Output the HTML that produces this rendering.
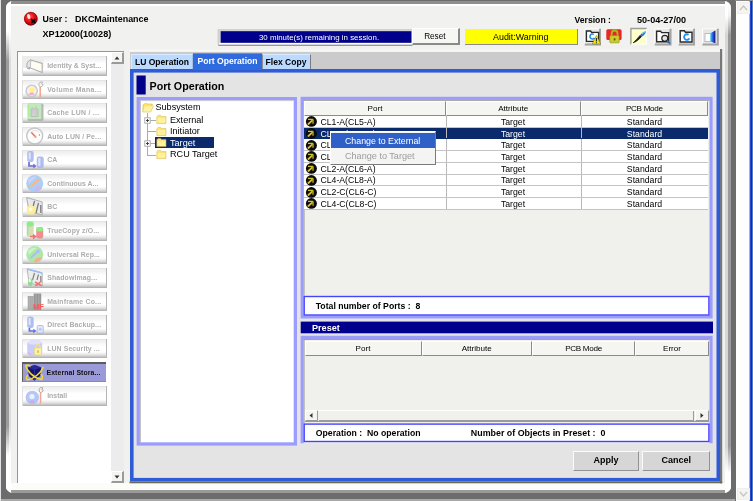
<!DOCTYPE html>
<html>
<head>
<meta charset="utf-8">
<title>Port Operation</title>
<style>
html,body{margin:0;padding:0;}
body{width:753px;height:501px;overflow:hidden;background:#6c6c6c;font-family:"Liberation Sans",sans-serif;font-size:9px;color:#000;position:relative;}
#root{position:absolute;left:0;top:0;width:753px;height:501px;will-change:transform;}
.abs{position:absolute;}
.t{position:absolute;white-space:pre;line-height:12px;}
.b{font-weight:bold;}
#panel{left:5.6px;top:1.3px;width:725.4px;height:491.7px;background:#f1f1ef;border-radius:7px;box-sizing:border-box;overflow:hidden;}
#panel .gl{position:absolute;left:0;top:0;width:3.2px;height:100%;background:linear-gradient(#fff 0,#fff 30px,#9c9c9c 60px,#9c9c9c 425px,#fff 455px);}
#panel .gl2{position:absolute;left:3.2px;top:0;width:2px;height:100%;background:linear-gradient(#fff 0,#fff 30px,#dcdcdc 60px,#dcdcdc 425px,#fff 455px);}
#panel .gr{position:absolute;right:0;top:0;width:3px;height:100%;background:linear-gradient(#fff 0,#f4f4f4 14px,#9a9a9a 34px,#9a9a9a 445px,#fff 472px);}
#panel .gr2{position:absolute;right:3px;top:0;width:3px;height:100%;background:linear-gradient(#fff 0,#fff 14px,#d6d6d6 34px,#d6d6d6 445px,#fff 472px);}
#panel .gt{position:absolute;left:0;top:0;width:100%;height:2.5px;background:#8e8e8e;}
#panel .gt2{position:absolute;left:0;top:2.5px;width:100%;height:2px;background:#fff;}
#panel .gb{position:absolute;left:0;bottom:0;width:100%;height:2.5px;background:#9a9a9a;}
#panel .gb2{position:absolute;left:0;bottom:2.5px;width:100%;height:7px;background:#fcfcf8;}
#rstrip{left:735.5px;top:0;width:14px;height:501px;background:#fff;}
#rblue{left:749px;top:0;width:4px;height:501px;background:linear-gradient(90deg,#a4acf4 0,#a4acf4 1px,#2848d4 1px,#2848d4 2px,#0030c0 2px,#0030c0 3px,#5080c8 3px);}
#redge{left:735px;top:0;width:18px;height:1px;background:#8a8a8a;}
#bedge{left:0;top:499px;width:735px;height:2px;background:#a8a8a8;}
#ledge{left:0;top:0;width:1px;height:501px;background:#e2e2e2;}
#nav{left:17.4px;top:51px;width:106.6px;height:432px;background:#fff;border:1.5px solid #969696;border-right:none;border-bottom:none;box-sizing:border-box;}
#navsb{left:111px;top:52px;width:13px;height:431px;background:#ececec;}
.sbtn{position:absolute;width:13px;height:12px;box-sizing:border-box;background:#f4f4f0;border:1px solid #fff;border-right:2px solid #9a9a9a;border-bottom:2px solid #9a9a9a;}
.nb{position:absolute;left:22.3px;width:84.4px;height:19.5px;box-sizing:border-box;
 background:linear-gradient(#ececec 0%,#f3f3f3 18%,#ffffff 38%,#ffffff 68%,#e6e6e6 82%,#c8c8c8 92%,#ababab 100%);box-shadow:inset 1px 0 0 #e0e0e0,inset -1px 0 0 #b4b4b4,inset 0 1px 0 #e4e4e4;}
.nb span{position:absolute;left:24.9px;top:4px;font-size:6.9px;color:#acacac;font-weight:bold;white-space:pre;line-height:12px;}
.nb svg{position:absolute;left:0px;top:0px;}
.nb.sel{box-shadow:none;background:#9a9ad8;border-top:2px solid #5c5c5c;border-left:1.5px solid #5c5c5c;border-bottom:1.6px solid #8c8c8c;left:21.7px;width:84.8px;height:20px;}
.nb.sel svg{left:-0.9px;top:-1px;}
.nb.sel span{left:23.8px;top:3.2px;}
.nb.sel span{color:#111;}
#tabstrip{left:130px;top:49.3px;width:590px;height:20.7px;background:#cbcbcb;border-top:2.6px solid #fbfbf9;box-sizing:border-box;}
.tab{position:absolute;box-sizing:border-box;font-weight:bold;font-size:8.55px;white-space:pre;text-align:center;}
#content{left:130px;top:69px;width:589.8px;height:412.5px;box-sizing:border-box;border:3.5px solid #2f57d8;background:#e4e4e4;}
#vline{left:719.8px;top:49px;width:2.2px;height:434px;background:#787878;}
#hline{left:130px;top:481.5px;width:592px;height:1.8px;background:#6e6e60;}
.lav{position:absolute;box-sizing:border-box;border:3.5px solid #9a9aff;}
.hdr{position:absolute;box-sizing:border-box;background:#f5f5f1;border:1px solid #fff;border-right-color:#8a8a8a;border-bottom-color:#8a8a8a;text-align:center;font-size:8.1px;white-space:pre;}
.row{position:absolute;left:304px;width:403.8px;height:11.76px;background:#fff;box-sizing:border-box;border-bottom:1px solid #c4c4c4;}
.row i{position:absolute;top:0;bottom:0;width:1px;background:#b8b8b8;}
.row span{position:absolute;top:0.8px;line-height:11.5px;font-size:8.7px;white-space:pre;}
.row .c2{left:142px;width:134px;text-align:center;}
.row .c3{left:277px;width:127px;text-align:center;}
.row .c1{left:16.5px;}
.row svg{position:absolute;left:2px;top:0.3px;overflow:visible;}
.row.sel{background:#0a2a6c;color:#fff;border-bottom-color:#0a2a6c;}
.box{position:absolute;box-sizing:border-box;background:#fff;border:1.5px solid #4545ff;}
.btn{position:absolute;box-sizing:border-box;background:#d6d6d6;border:1px solid #fbfbfb;border-right:1.7px solid #929292;border-bottom:1.7px solid #929292;font-weight:bold;font-size:9px;text-align:center;white-space:pre;}
.tb{position:absolute;top:29.5px;height:16px;box-sizing:border-box;border:1px solid #fff;border-right:2px solid #8a8a8a;border-bottom:2px solid #8a8a8a;background:#e9e9e9;}
.tb svg{position:absolute;left:0;top:0;}
.tree{position:absolute;font-size:9.1px;line-height:12px;white-space:pre;}
</style>
</head>
<body>
<div id="root">
<div id="panel" class="abs"><div class="gt"></div><div class="gt2"></div><div class="gb2"></div><div class="gb"></div><div class="gl"></div><div class="gl2"></div><div class="gr2"></div><div class="gr"></div></div>
<div id="rstrip" class="abs"></div><div id="rblue" class="abs"></div><div id="redge" class="abs"></div><div id="bedge" class="abs"></div><div id="ledge" class="abs"></div>
<svg class="abs" style="left:736.5px;top:2px" width="13" height="12" viewBox="0 0 13 12"><rect x="0.5" y="0.5" width="12" height="11" fill="#f6f4ee" stroke="#efefef"/><path d="M3 8 L6.5 4 L10 8" fill="none" stroke="#c4c4c4" stroke-width="1.3"/></svg>
<svg class="abs" style="left:736.5px;top:487.6px" width="13" height="12" viewBox="0 0 13 12"><rect x="0.5" y="0.5" width="12" height="11" fill="#f6f4ee" stroke="#efefef"/><path d="M3 4 L6.5 8 L10 4" fill="none" stroke="#c4c4c4" stroke-width="1.3"/></svg>
<svg class="abs" style="left:20px;top:8px" width="24" height="20" viewBox="20 8 24 20">
 <defs><radialGradient id="rg" cx="42%" cy="38%" r="62%"><stop offset="0" stop-color="#ff6060"/><stop offset=".45" stop-color="#f01818"/><stop offset=".85" stop-color="#c00008"/><stop offset="1" stop-color="#6a0010"/></radialGradient></defs>
 <circle cx="30.8" cy="18.7" r="6.8" fill="url(#rg)"/>
 <circle cx="30.8" cy="18.7" r="6.5" fill="none" stroke="#400010" stroke-width=".7" opacity=".55"/>
 <ellipse cx="28.7" cy="16.5" rx="1.5" ry="2.5" fill="#fff" opacity=".85" transform="rotate(-15 28.7 16.5)"/>
 <path d="M31 19 L35.2 22.8 M35.2 19.2 L31.4 22.8" stroke="#120000" stroke-width="1.7"/>
</svg>
<div class="t b" style="left:42.5px;top:13px;font-size:8.8px;">User :</div>
<div class="t b" style="left:75px;top:13px;font-size:8.95px;">DKCMaintenance</div>
<div class="t b" style="left:42.5px;top:28px;font-size:9.1px;">XP12000(10028)</div>
<svg class="abs" style="left:0;top:0" width="753" height="501" viewBox="0 0 753 501"><rect x="218.3" y="44.3" width="194.10" height="1.60" fill="#8c8c8c"/><rect x="217.5" y="29" width="194.80" height="15.40" fill="#d2d2ce"/><rect x="219.2" y="42.8" width="193.10" height="1.60" fill="#ffffff"/><rect x="220.7" y="31.2" width="190.70" height="11.60" fill="#00008a"/></svg>
<div class="t" style="left:220px;top:31.5px;width:198px;text-align:center;color:#fff;font-size:7.9px;line-height:11px;">30 minute(s) remaining in session.</div>
<div class="abs" style="left:411.6px;top:28.2px;width:48.8px;height:17.3px;box-sizing:border-box;background:#f6f6f2;border-top:1px solid #fff;border-left:1px solid #fff;border-right:2.6px solid #8a8a8a;border-bottom:2.2px solid #8a8a8a;"></div>
<div class="t" style="left:411.6px;top:31.3px;width:46.5px;text-align:center;font-size:8.2px;">Reset</div>
<div class="abs" style="left:465.3px;top:29px;width:113px;height:16.2px;background:#ffff00;border-right:1px solid #8a8a8a;border-bottom:1px solid #8a8a8a;box-sizing:border-box;"></div>
<div class="t" style="left:465.3px;top:31.3px;width:111px;text-align:center;font-size:8.9px;">Audit:Warning</div>
<div class="t b" style="left:574.5px;top:14px;font-size:8.65px;">Version :</div>
<div class="t b" style="left:637px;top:14px;font-size:9.1px;">50-04-27/00</div>
<svg class="abs" style="left:0;top:0" width="753" height="60" viewBox="0 0 753 60"><defs><linearGradient id="door" x1="0" x2="1"><stop offset="0" stop-color="#58d0f8"/><stop offset=".5" stop-color="#2060e0"/><stop offset="1" stop-color="#200878"/></linearGradient></defs><rect x="584.3" y="28.3" width="16.7" height="17.2" fill="#e6e6e6"/><path d="M584.8 44.5 V28.8 H600" fill="none" stroke="#fff" stroke-width="1"/><path d="M584.8 44.5 H600 V28.8" fill="none" stroke="#a4a4a4" stroke-width="2"/><path d="M586.4 31 H590.6 L591.6 32.4 H598.6 V41.4 H586.4 Z" fill="#fff" stroke="#2a2a2a" stroke-width="1.4"/><path d="M593.8 34.4 A2.5 2.5 0 1 0 594.6 37.8" fill="none" stroke="#1e88e8" stroke-width="1.6"/><path d="M596.4 35.4 L592.3 44 L600.6 44 Z" fill="#f4ec00" stroke="#7c6c00" stroke-width=".5"/><path d="M596.4 38 V41.4 M596.4 42.3 V43.3" stroke="#222" stroke-width="1.1"/><rect x="606.3" y="29.3" width="15.3" height="10.8" rx="1.5" fill="#e42828"/><path d="M611.7 36 V33.4 A2.9 2.9 0 0 1 617.5 33.4 V36" fill="none" stroke="#b4b420" stroke-width="1.8"/><rect x="609.8" y="35.6" width="9.4" height="7.2" rx=".8" fill="#cccc2c" stroke="#8c8c10" stroke-width=".6"/><rect x="613.8" y="38.2" width="1.6" height="2.2" fill="#555500"/><rect x="630.2" y="27.8" width="16.8" height="16.8" fill="#ffffcc"/><path d="M630.9000000000001 44.6 V28.5 H647" fill="none" stroke="#9c9c9c" stroke-width="1.4"/><path d="M631.2 44.1 H646.5 V28.8" fill="none" stroke="#fff" stroke-width="1"/><path d="M633.2 42.8 C636 41.8 639 39.6 641.6 36.4 L640.2 35.2 C638 38 635.6 40.4 633.2 42.8 Z" fill="#1a1a1a" stroke="#1a1a1a" stroke-width=".7"/><path d="M640 35.2 C641.6 33.2 643.8 31.6 646 31 C645.8 33.4 644 35.6 641.8 36.8 Z" fill="#2878e0"/><path d="M642 34 C643 33 644.4 32 645.4 31.6" stroke="#70e0f8" stroke-width=".9" fill="none"/><rect x="654.3" y="28.3" width="17.2" height="17.2" fill="#e6e6e6"/><path d="M654.8 44.5 V28.8 H670.5" fill="none" stroke="#fff" stroke-width="1"/><path d="M654.8 44.5 H670.5 V28.8" fill="none" stroke="#a4a4a4" stroke-width="2"/><path d="M656.6 31.2 H660.6 L661.6 32.6 H668.6 V41.8 H656.6 Z" fill="#fff" stroke="#2a2a2a" stroke-width="1.4"/><circle cx="664.8" cy="38.3" r="3" fill="#e4e4e4" stroke="#222" stroke-width="1.2"/><path d="M667 40.6 L670 43.6" stroke="#1870d0" stroke-width="1.7"/><rect x="678.2" y="28.3" width="16.8" height="17.2" fill="#e6e6e6"/><path d="M678.7 44.5 V28.8 H694" fill="none" stroke="#fff" stroke-width="1"/><path d="M678.7 44.5 H694 V28.8" fill="none" stroke="#a4a4a4" stroke-width="2"/><path d="M680.2 30.8 H684.4 L685.4 32.2 H692 V42 H680.2 Z" fill="#fff" stroke="#2a2a2a" stroke-width="1.4"/><path d="M688.6 34.8 A2.8 2.8 0 1 0 689.4 38.4" fill="none" stroke="#1e90f0" stroke-width="1.9"/><rect x="702" y="28.3" width="16.8" height="17.2" fill="#e6e6e6"/><path d="M702.5 44.5 V28.8 H717.8" fill="none" stroke="#fff" stroke-width="1"/><path d="M702.5 44.5 H717.8 V28.8" fill="none" stroke="#a4a4a4" stroke-width="2"/><rect x="705" y="33.6" width="6.4" height="8" fill="#fff" stroke="#b0b0b0" stroke-width=".8"/><path d="M710.2 33.2 L715.4 30.6 V43.2 L710.2 41.6 Z" fill="url(#door)"/></svg>
<div id="nav" class="abs"></div><div id="navsb" class="abs"></div>
<div class="sbtn" style="left:111px;top:52.3px;"><svg class="abs" style="left:0;top:0" width="10" height="10"><path d="M2.5 6.5 L5 3.5 L7.5 6.5 Z" fill="#333"/></svg></div>
<div class="sbtn" style="left:111px;top:470.6px;"><svg class="abs" style="left:0;top:0" width="10" height="10"><path d="M2.5 3.5 L5 6.5 L7.5 3.5 Z" fill="#333"/></svg></div>
<div class="nb" style="top:56.0px"><svg width="24" height="19.5" viewBox="0 0 24 19.5" style="opacity:0.92"><rect x="0" y="0" width="21.5" height="12" fill="#ededed"/><path d="M8.7 4 L20.2 7.5 L20.2 16.5 L8.2 12 Z" fill="#fffdf0" stroke="#a8a8a8" stroke-width="1.1"/><path d="M8.5 4.2 C5 5 4 9 5.5 12.5 L8.2 12" fill="#e4e4e4" stroke="#a0a0a0" stroke-width="1"/><path d="M7.2 11 V13.6" stroke="#d070d0" stroke-width="1"/></svg><span style="letter-spacing:0.02px">Identity &amp; Syst...</span></div>
<div class="nb" style="top:79.6px"><svg width="24" height="19.5" viewBox="0 0 24 19.5" style="opacity:0.92"><circle cx="9.7" cy="10.9" r="5.6" fill="#fbeef2" stroke="#c8c8c8" stroke-width="1.6"/><circle cx="9.9" cy="10.2" r="2.8" fill="#fff27a"/><path d="M6.5 13.5 A4.2 4.2 0 0 0 12.8 13.8 L10 12.2 Z" fill="#f0a0e4"/><path d="M18.2 6.5 V17.5" stroke="#f0a088" stroke-width="1.6"/><path d="M17.6 6.6 C15.6 4 18 1 20.6 2.2 L19.6 3.8 L21 4.6 C21 6 19.6 6.8 18.6 6.6" fill="none" stroke="#a8a8a8" stroke-width="1"/></svg><span style="letter-spacing:0.33px">Volume Mana...</span></div>
<div class="nb" style="top:103.1px"><svg width="24" height="19.5" viewBox="0 0 24 19.5" style="opacity:0.92"><rect x="5.7" y="0.5" width="15.8" height="17.5" rx="1.5" fill="#b4b4b4"/><rect x="5.7" y="0.5" width="13.5" height="15.5" fill="#bdeab6"/><rect x="9" y="6" width="7" height="7.5" fill="#cfcfcf" stroke="#b0b0b0" stroke-width=".8"/><path d="M10.5 4 V10 M14 3 V12" stroke="#c4c4c4" stroke-width="1.6"/><path d="M6.6 2 V13" stroke="#98f080" stroke-width="1"/></svg><span style="letter-spacing:0.26px">Cache LUN / ...</span></div>
<div class="nb" style="top:126.7px"><svg width="24" height="19.5" viewBox="0 0 24 19.5" style="opacity:0.92"><circle cx="12.7" cy="9" r="8" fill="#fdfdfd" stroke="#c2c2c2" stroke-width="1.4"/><path d="M8 6 A6 6 0 0 1 17 5" fill="none" stroke="#dcdcdc" stroke-width="1"/><path d="M9.4 5.6 L14.2 10.6" stroke="#f05858" stroke-width="1.4"/><circle cx="13" cy="9.6" r="1" fill="#f0a040"/><circle cx="17.4" cy="8" r=".7" fill="#f06060"/></svg><span style="letter-spacing:0.15px">Auto LUN / Pe...</span></div>
<div class="nb" style="top:150.3px"><svg width="24" height="19.5" viewBox="0 0 24 19.5" style="opacity:0.92"><rect x="5.2" y="1" width="6.5" height="11" rx="2" fill="#aab8f0"/><rect x="6.6" y="2.4" width="2.2" height="7" fill="#d8e0fa"/><rect x="14.7" y="6.5" width="7" height="11.5" rx="2" fill="#aab8f0"/><rect x="16.2" y="8" width="2.2" height="8" fill="#d8e0fa"/><path d="M7 12 V16 H12" fill="none" stroke="#6060d8" stroke-width="1.7"/><path d="M11.4 13.6 L14.4 16 L11.4 18.4 Z" fill="#6060d8"/></svg><span style="letter-spacing:0.00px">CA</span></div>
<div class="nb" style="top:173.8px"><svg width="24" height="19.5" viewBox="0 0 24 19.5" style="opacity:0.92"><circle cx="12.7" cy="9.5" r="8.5" fill="#a4ccf8"/><path d="M6 6 C8 3 12 2 15 3 C12 5 9 7 7 10 Z" fill="#c8d0fa"/><path d="M14 12 C16 11 19 12 20 14 C18 17 15 18 12 17.6 Z" fill="#c0b8f4"/><path d="M8.4 12.6 L16.6 5.6" stroke="#f8b47c" stroke-width="2.2"/><path d="M14 5 L18 4.4 L17 8.4 Z M7 10 L6.8 14 L10.8 13.4 Z" fill="#f8b47c"/></svg><span style="letter-spacing:0.04px">Continuous A...</span></div>
<div class="nb" style="top:197.4px"><svg width="24" height="19.5" viewBox="0 0 24 19.5" style="opacity:0.92"><path d="M4.7 0.5 L20.2 5 L20.2 18 L7 14.5 Z" fill="#e8e8e8" stroke="#a8a8a8" stroke-width="1"/><path d="M12.5 4 L10 14 M16.5 6 L14 16 M18.8 8 V16" stroke="#707070" stroke-width="1.3"/><circle cx="9.2" cy="13" r="4.6" fill="#ffef8a"/><circle cx="8.6" cy="12.6" r="2" fill="#fffbe0"/></svg><span style="letter-spacing:0.00px">BC</span></div>
<div class="nb" style="top:221.0px"><svg width="24" height="19.5" viewBox="0 0 24 19.5" style="opacity:0.92"><rect x="4.7" y="0.5" width="7" height="15.5" rx="2.5" fill="#d4dcb0"/><rect x="4.7" y="0.5" width="7" height="5" rx="2.5" fill="#84ec84"/><path d="M5.6 5 V14.5" stroke="#88e888" stroke-width="1.3"/><rect x="14.2" y="6" width="7" height="11.5" rx="2.5" fill="#f08484"/><rect x="14.2" y="6" width="7" height="4.6" rx="2.3" fill="#84ec84"/><path d="M8 15.6 H13 M11 13.6 L13.6 15.6 L11 17.6" stroke="#f06868" stroke-width="1.5" fill="none"/></svg><span style="letter-spacing:0.13px">TrueCopy z/O...</span></div>
<div class="nb" style="top:244.6px"><svg width="24" height="19.5" viewBox="0 0 24 19.5" style="opacity:0.92"><circle cx="12.7" cy="9.5" r="8.5" fill="#a6e8a0"/><path d="M6 6 C8 3 12 2 15 3 C12 5 9 7 7 10 Z" fill="#c8f4c0"/><path d="M13 14 C16 12 19 12 20.6 12.6 C19 16 16 18 12 17.8 Z" fill="#f8a890"/><path d="M8.4 13 L16.6 6" stroke="#b0b4f8" stroke-width="2.2"/><path d="M14 5.2 L18 4.6 L17 8.6 Z" fill="#b0b4f8"/></svg><span style="letter-spacing:0.06px">Universal Rep...</span></div>
<div class="nb" style="top:268.1px"><svg width="24" height="19.5" viewBox="0 0 24 19.5" style="opacity:0.92"><path d="M5.2 1 L20.2 5 L20.2 18 L7 15 Z" fill="#ececec" stroke="#b0b0b0" stroke-width="1"/><path d="M5.2 1 L20.2 5" stroke="#90b8f8" stroke-width="1.4"/><path d="M12.5 5 L10.5 12 M16.5 6.5 L15 12 M18.8 8 V13" stroke="#787878" stroke-width="1.2"/><rect x="6" y="10.5" width="4.6" height="7.5" rx="2" fill="#8cd88c"/><rect x="6.8" y="11" width="2" height="3" fill="#e8ffe8"/><path d="M13 14 L19.6 17.6 M19.6 13 L13.4 18" stroke="#f06868" stroke-width="1.6"/></svg><span style="letter-spacing:0.14px">ShadowImag...</span></div>
<div class="nb" style="top:291.7px"><svg width="24" height="19.5" viewBox="0 0 24 19.5" style="opacity:0.92"><rect x="5.7" y="4" width="6" height="14" fill="#a2a2a2"/><rect x="11.7" y="1.5" width="7.5" height="16.5" fill="#8e8e8e"/><path d="M7.6 4.5 V17.5 M9.8 4.5 V17.5 M14 2 V17.5 M16.8 2 V17.5" stroke="#b4b4b4" stroke-width=".7"/><text x="11" y="17.4" font-family="Liberation Sans,sans-serif" font-weight="bold" font-size="7.6" fill="#f45050">MF</text></svg><span style="letter-spacing:0.19px">Mainframe Co...</span></div>
<div class="nb" style="top:315.3px"><svg width="24" height="19.5" viewBox="0 0 24 19.5" style="opacity:0.92"><rect x="5.2" y="1.5" width="6.5" height="11.5" rx="2.2" fill="#a8b8f4"/><rect x="6.6" y="3" width="2" height="7" fill="#dce4fc"/><path d="M7.4 13 V16 H12.4" fill="none" stroke="#5868e0" stroke-width="1.7"/><path d="M11.4 13.8 L14.4 16 L11.4 18.2 Z" fill="#5868e0"/><rect x="15.2" y="10.5" width="6" height="7.5" rx="1" fill="#e4e8fc" stroke="#a8b0d8" stroke-width=".9"/><circle cx="18.2" cy="14.2" r="1.5" fill="#b8c4f0"/></svg><span style="letter-spacing:0.12px">Direct Backup...</span></div>
<div class="nb" style="top:338.8px"><svg width="24" height="19.5" viewBox="0 0 24 19.5" style="opacity:0.92"><path d="M5.2 4 L9 1.5 H17 L20.2 4 V15 L17 17 H8 L5.2 15 Z" fill="#c8c8f8"/><path d="M5.2 4 L9 1.5 H17 L20.2 4 L16 5.4 H9 Z" fill="#e0e0fc"/><rect x="12.4" y="9" width="7.2" height="7" rx="1" fill="#fbf3a4" stroke="#e4d468" stroke-width=".7"/><path d="M14 9 V7.6 A2 2 0 0 1 18 7.6 V9" fill="none" stroke="#f0e080" stroke-width="1.3"/><rect x="15.4" y="11.4" width="1.3" height="2.4" fill="#c0a040"/><path d="M6.4 14 L9 16" stroke="#e0a0e0" stroke-width="1"/></svg><span style="letter-spacing:0.11px">LUN Security ...</span></div>
<div class="nb sel" style="top:361.5px"><svg width="24" height="19.5" viewBox="0 0 24 19.5" style="opacity:1"><path d="M5.7 4.6 L12.6 2 L19.2 4.6 L18.2 13 L12.4 17.6 L6.8 13 Z" fill="#14146c"/><path d="M5.7 4.6 L12.6 7 L19.2 4.6 L12.6 2 Z" fill="#2a2a9a"/><path d="M12.6 7 L12.4 17.6" stroke="#38389c" stroke-width=".8"/><path d="M3.6 2.4 C5 8 11 14.6 19.6 16.6 C21 14 20 12 19 11" fill="none" stroke="#f4dc28" stroke-width="1.5"/><path d="M21.4 4 C19 10 12 15.6 5.4 17 C4 15.4 4.6 13.4 6 12" fill="none" stroke="#f4dc28" stroke-width="1.5"/><path d="M3.6 2.4 C5.6 1.6 7.6 2.4 8.6 3.4" fill="none" stroke="#f4dc28" stroke-width="1.3"/></svg><span style="letter-spacing:0.09px">External Stora...</span></div>
<div class="nb" style="top:386.0px"><svg width="24" height="19.5" viewBox="0 0 24 19.5" style="opacity:0.92"><circle cx="10.3" cy="11.5" r="6.6" fill="#a6c8f8"/><circle cx="10.3" cy="11.5" r="6" fill="none" stroke="#c4b8f0" stroke-width="1.2"/><circle cx="10" cy="10.6" r="2.6" fill="#e8f2ff"/><path d="M6.4 15.6 A5.6 5.6 0 0 0 13.6 16 L10.3 13.6 Z" fill="#c8a8ec"/><path d="M18.5 6 V17.5" stroke="#f0a088" stroke-width="1.6"/><path d="M17.8 6 C15.8 3.4 18.2 0.6 20.8 1.8 L19.8 3.4 L21.2 4.2 C21.2 5.6 19.8 6.4 18.8 6.2" fill="none" stroke="#a0a0a0" stroke-width="1"/></svg><span style="letter-spacing:0.00px">Install</span></div>
<svg class="abs" style="left:0;top:0" width="753" height="501" viewBox="0 0 753 501"><rect x="130" y="49.6" width="590.00" height="2.40" fill="#f8f8f6"/><rect x="130" y="51.9" width="590.00" height="17.60" fill="#cbcbcb"/><rect x="720" y="49" width="2.20" height="434.30" fill="#787878"/><rect x="129.5" y="481.5" width="592.70" height="1.80" fill="#6a6a58"/><rect x="131.80" y="70.80" width="586.50" height="408.90" fill="#e4e4e4" stroke="#2f5bd6" stroke-width="3.6"/><rect x="136.5" y="75.5" width="9.20" height="19.00" fill="#00008b"/><rect x="138.25" y="98.65" width="157.10" height="345.30" fill="#ffffff" stroke="#9c9cff" stroke-width="3.3"/><rect x="139.9" y="100.3" width="0.90" height="342.00" fill="#b4b4b4"/><rect x="139.9" y="100.3" width="153.80" height="0.80" fill="#c4c4c4"/><rect x="302.15" y="98.35" width="408.90" height="218.60" fill="#f0f0ec" stroke="#9c9cff" stroke-width="3.1"/><rect x="300.7" y="321.6" width="412.30" height="11.70" fill="#00008c"/><path d="M302.15 443.2 V337.35 H711.05 V443.2" fill="#f0f0ec" stroke="#9c9cff" stroke-width="3.1"/><rect x="303.6" y="99.8" width="406.00" height="1.00" fill="#9a9a9a"/><rect x="303.6" y="99.8" width="1.00" height="196.00" fill="#a4a4a4"/><rect x="303.6" y="338.8" width="406.00" height="1.10" fill="#9a9a9a"/><rect x="303.6" y="338.8" width="1.00" height="84.60" fill="#a4a4a4"/><rect x="304.20" y="296.50" width="404.70" height="18.50" fill="#ffffff" stroke="#4444ff" stroke-width="1.4"/><rect x="304.20" y="424.10" width="404.70" height="17.40" fill="#ffffff" stroke="#4444ff" stroke-width="1.4"/></svg>
<div class="tab" style="left:131px;top:54px;width:62px;height:15px;background:#badaff;border:1px solid #d8eaff;border-right-color:#a4c0e4;border-bottom:none;line-height:14.5px;">LU Operation</div>
<div class="tab" style="left:193px;top:53px;width:69px;height:17px;background:#2f6adf;color:#fff;border-top:1px solid #5c8cf0;line-height:14.5px;font-size:8.6px;">Port Operation</div>
<div class="tab" style="left:261.5px;top:54px;width:49px;height:15px;background:#badaff;border:1px solid #d8eaff;border-left:1.5px solid #8a8e96;border-right:1.6px solid #7c7c7c;border-bottom:none;line-height:14.5px;">Flex Copy</div>
<div class="t b" style="left:149.5px;top:79.5px;font-size:10.7px;">Port Operation</div>
<svg class="abs" style="left:141.5px;top:102.2px" width="12" height="11" viewBox="0 0 12 11"><path d="M1 3 L3 1.5 L6 2 L10.5 2 L9.5 4 L11.5 4 L8.5 10 L0.8 10 Z" fill="#fde474" stroke="#d0a838" stroke-width=".5"/><path d="M3 4.5 L11 4.2 L8.2 9.6 L1.2 9.6 Z" fill="#fff4a8"/></svg>
<div class="tree" style="left:155.5px;top:100.7px;">Subsystem</div>
<div class="abs" style="left:147px;top:112.7px;width:1px;height:42.2px;background:#ababab;"></div>
<div class="abs" style="left:147px;top:119.5px;width:9px;height:1px;background:#ababab;"></div>
<svg class="abs" style="left:155.6px;top:113.8px" width="11" height="11" viewBox="0 0 11 11"><path d="M0.8 2.8 L2 1.4 L4.6 1.4 L5.4 2.6 L10 2.6 L10 9.6 L0.8 9.6 Z" fill="#fde474" stroke="#d8b448" stroke-width=".5"/><path d="M1.6 4 H9.2 V8.8 H1.6 Z" fill="#fff29a"/></svg>
<div class="tree" style="left:170px;top:113.5px;">External</div>
<svg class="abs" style="left:144px;top:116.5px" width="7" height="7" viewBox="0 0 7 7"><rect x=".8" y=".8" width="5.4" height="5.4" fill="#fff" stroke="#9a9a9a" stroke-width=".8"/><path d="M2 3.5 H5 M3.5 2 V5" stroke="#333" stroke-width=".9"/></svg>
<div class="abs" style="left:147px;top:131.3px;width:9px;height:1px;background:#ababab;"></div>
<svg class="abs" style="left:155.6px;top:125.6px" width="11" height="11" viewBox="0 0 11 11"><path d="M0.8 2.8 L2 1.4 L4.6 1.4 L5.4 2.6 L10 2.6 L10 9.6 L0.8 9.6 Z" fill="#fde474" stroke="#d8b448" stroke-width=".5"/><path d="M1.6 4 H9.2 V8.8 H1.6 Z" fill="#fff29a"/></svg>
<div class="tree" style="left:170px;top:125.3px;">Initiator</div>
<div class="abs" style="left:147px;top:143.1px;width:9px;height:1px;background:#ababab;"></div>
<div class="abs" style="left:155px;top:136.8px;width:59.3px;height:11.6px;background:#0a2a6c;"></div>
<svg class="abs" style="left:155.6px;top:137.4px" width="11" height="11" viewBox="0 0 11 11"><path d="M0.8 2.8 L2 1.4 L4.6 1.4 L5.4 2.6 L10 2.6 L10 9.6 L0.8 9.6 Z" fill="#fde474" stroke="#d8b448" stroke-width=".5"/><path d="M1.6 4 H9.2 V8.8 H1.6 Z" fill="#fff29a"/></svg>
<div class="tree" style="left:170px;top:137.1px;color:#fff;">Target</div>
<svg class="abs" style="left:144px;top:140.1px" width="7" height="7" viewBox="0 0 7 7"><rect x=".8" y=".8" width="5.4" height="5.4" fill="#fff" stroke="#9a9a9a" stroke-width=".8"/><path d="M2 3.5 H5 M3.5 2 V5" stroke="#333" stroke-width=".9"/></svg>
<div class="abs" style="left:147px;top:154.9px;width:9px;height:1px;background:#ababab;"></div>
<svg class="abs" style="left:155.6px;top:149.2px" width="11" height="11" viewBox="0 0 11 11"><path d="M0.8 2.8 L2 1.4 L4.6 1.4 L5.4 2.6 L10 2.6 L10 9.6 L0.8 9.6 Z" fill="#fde474" stroke="#d8b448" stroke-width=".5"/><path d="M1.6 4 H9.2 V8.8 H1.6 Z" fill="#fff29a"/></svg>
<div class="tree" style="left:170px;top:148.3px;">RCU Target</div>
<div class="hdr" style="left:304px;top:100.8px;width:142px;height:15px;line-height:14px;">Port</div>
<div class="hdr" style="left:446px;top:100.8px;width:134.5px;height:15px;line-height:14px;">Attribute</div>
<div class="hdr" style="left:580.5px;top:100.8px;width:127.7px;height:15px;line-height:14px;letter-spacing:-.3px;">PCB Mode</div>
<div class="row" style="top:116.00px"><svg width="11" height="11" viewBox="0 -0.4 11 11"><ellipse cx="5.4" cy="5" rx="5.5" ry="5.3" fill="#0c0c0c"/><path d="M2.4 7.6 L6.4 4" stroke="#dcc034" stroke-width="1.8" stroke-linecap="round"/><path d="M2 3 H7.2" stroke="#d0c820" stroke-width="1.3"/><path d="M7 3.2 V7.4" stroke="#a8a020" stroke-width="1.5"/><path d="M3 7.4 L4.4 6.2" stroke="#f0a860" stroke-width="1"/></svg><span class="c1">CL1-A(CL5-A)</span><i style="left:142px"></i><span class="c2">Target</span><i style="left:276.5px"></i><span class="c3">Standard</span></div>
<div class="row sel" style="top:127.72px"><svg width="11" height="11" viewBox="0 -0.4 11 11"><ellipse cx="5.4" cy="5" rx="5.5" ry="5.3" fill="#0c0c0c"/><path d="M2.4 7.6 L6.4 4" stroke="#dcc034" stroke-width="1.8" stroke-linecap="round"/><path d="M2 3 H7.2" stroke="#d0c820" stroke-width="1.3"/><path d="M7 3.2 V7.4" stroke="#a8a020" stroke-width="1.5"/><path d="M3 7.4 L4.4 6.2" stroke="#f0a860" stroke-width="1"/></svg><span class="c1">CL3-A(CL7-A)</span><i style="left:142px"></i><span class="c2">Target</span><i style="left:276.5px"></i><span class="c3">Standard</span></div>
<div class="row" style="top:139.44px"><svg width="11" height="11" viewBox="0 -0.4 11 11"><ellipse cx="5.4" cy="5" rx="5.5" ry="5.3" fill="#0c0c0c"/><path d="M2.4 7.6 L6.4 4" stroke="#dcc034" stroke-width="1.8" stroke-linecap="round"/><path d="M2 3 H7.2" stroke="#d0c820" stroke-width="1.3"/><path d="M7 3.2 V7.4" stroke="#a8a020" stroke-width="1.5"/><path d="M3 7.4 L4.4 6.2" stroke="#f0a860" stroke-width="1"/></svg><span class="c1">CL1-C(CL5-C)</span><i style="left:142px"></i><span class="c2">Target</span><i style="left:276.5px"></i><span class="c3">Standard</span></div>
<div class="row" style="top:151.16px"><svg width="11" height="11" viewBox="0 -0.4 11 11"><ellipse cx="5.4" cy="5" rx="5.5" ry="5.3" fill="#0c0c0c"/><path d="M2.4 7.6 L6.4 4" stroke="#dcc034" stroke-width="1.8" stroke-linecap="round"/><path d="M2 3 H7.2" stroke="#d0c820" stroke-width="1.3"/><path d="M7 3.2 V7.4" stroke="#a8a020" stroke-width="1.5"/><path d="M3 7.4 L4.4 6.2" stroke="#f0a860" stroke-width="1"/></svg><span class="c1">CL3-C(CL7-C)</span><i style="left:142px"></i><span class="c2">Target</span><i style="left:276.5px"></i><span class="c3">Standard</span></div>
<div class="row" style="top:162.88px"><svg width="11" height="11" viewBox="0 -0.4 11 11"><ellipse cx="5.4" cy="5" rx="5.5" ry="5.3" fill="#0c0c0c"/><path d="M2.4 7.6 L6.4 4" stroke="#dcc034" stroke-width="1.8" stroke-linecap="round"/><path d="M2 3 H7.2" stroke="#d0c820" stroke-width="1.3"/><path d="M7 3.2 V7.4" stroke="#a8a020" stroke-width="1.5"/><path d="M3 7.4 L4.4 6.2" stroke="#f0a860" stroke-width="1"/></svg><span class="c1">CL2-A(CL6-A)</span><i style="left:142px"></i><span class="c2">Target</span><i style="left:276.5px"></i><span class="c3">Standard</span></div>
<div class="row" style="top:174.60px"><svg width="11" height="11" viewBox="0 -0.4 11 11"><ellipse cx="5.4" cy="5" rx="5.5" ry="5.3" fill="#0c0c0c"/><path d="M2.4 7.6 L6.4 4" stroke="#dcc034" stroke-width="1.8" stroke-linecap="round"/><path d="M2 3 H7.2" stroke="#d0c820" stroke-width="1.3"/><path d="M7 3.2 V7.4" stroke="#a8a020" stroke-width="1.5"/><path d="M3 7.4 L4.4 6.2" stroke="#f0a860" stroke-width="1"/></svg><span class="c1">CL4-A(CL8-A)</span><i style="left:142px"></i><span class="c2">Target</span><i style="left:276.5px"></i><span class="c3">Standard</span></div>
<div class="row" style="top:186.32px"><svg width="11" height="11" viewBox="0 -0.4 11 11"><ellipse cx="5.4" cy="5" rx="5.5" ry="5.3" fill="#0c0c0c"/><path d="M2.4 7.6 L6.4 4" stroke="#dcc034" stroke-width="1.8" stroke-linecap="round"/><path d="M2 3 H7.2" stroke="#d0c820" stroke-width="1.3"/><path d="M7 3.2 V7.4" stroke="#a8a020" stroke-width="1.5"/><path d="M3 7.4 L4.4 6.2" stroke="#f0a860" stroke-width="1"/></svg><span class="c1">CL2-C(CL6-C)</span><i style="left:142px"></i><span class="c2">Target</span><i style="left:276.5px"></i><span class="c3">Standard</span></div>
<div class="row" style="top:198.04px"><svg width="11" height="11" viewBox="0 -0.4 11 11"><ellipse cx="5.4" cy="5" rx="5.5" ry="5.3" fill="#0c0c0c"/><path d="M2.4 7.6 L6.4 4" stroke="#dcc034" stroke-width="1.8" stroke-linecap="round"/><path d="M2 3 H7.2" stroke="#d0c820" stroke-width="1.3"/><path d="M7 3.2 V7.4" stroke="#a8a020" stroke-width="1.5"/><path d="M3 7.4 L4.4 6.2" stroke="#f0a860" stroke-width="1"/></svg><span class="c1">CL4-C(CL8-C)</span><i style="left:142px"></i><span class="c2">Target</span><i style="left:276.5px"></i><span class="c3">Standard</span></div>
<div class="abs" style="left:329.5px;top:131.3px;width:106.7px;height:34.2px;background:#f4f4f2;box-sizing:border-box;border:1px solid #fff;border-right:1.5px solid #7a7a7a;border-bottom:1.5px solid #7a7a7a;"></div>
<div class="abs" style="left:331px;top:133px;width:103.5px;height:14.6px;background:#2f60c8;"></div>
<div class="t" style="left:345px;top:134.5px;color:#fff;font-size:8.8px;">Change to External</div>
<div class="t" style="left:345px;top:149.6px;color:#9c9c9c;font-size:9.1px;">Change to Target</div>
<div class="t b" style="left:315.7px;top:300px;font-size:8.7px;">Total number of Ports :  8</div>
<div class="t b" style="left:312px;top:322.5px;color:#fff;font-size:9.1px;line-height:11.5px;">Preset</div>
<div class="hdr" style="left:304.5px;top:340.8px;width:117px;height:15px;line-height:14px;">Port</div>
<div class="hdr" style="left:421.5px;top:340.8px;width:110.5px;height:15px;line-height:14px;">Attribute</div>
<div class="hdr" style="left:532px;top:340.8px;width:103px;height:15px;line-height:14px;letter-spacing:-.3px;">PCB Mode</div>
<div class="hdr" style="left:635px;top:340.8px;width:74px;height:15px;line-height:14px;">Error</div>
<div class="abs" style="left:304.5px;top:409.5px;width:404.5px;height:12px;background:#eeeeea;border-top:1px solid #fff;border-bottom:1px solid #9a9a9a;box-sizing:border-box;"></div>
<div class="sbtn" style="left:305px;top:410px;width:13px;height:11px;border-right-width:1.5px;border-bottom-width:1px;"><svg class="abs" style="left:0;top:0" width="11" height="9"><path d="M6.5 2 L3.5 4.5 L6.5 7 Z" fill="#333"/></svg></div>
<div class="sbtn" style="left:695px;top:410px;width:14px;height:11px;border-right-width:1.5px;border-bottom-width:1px;"><svg class="abs" style="left:0;top:0" width="12" height="9"><path d="M4.5 2 L7.5 4.5 L4.5 7 Z" fill="#333"/></svg></div>
<div class="abs" style="left:319px;top:410.5px;width:375px;height:10px;box-sizing:border-box;border-right:1px solid #9a9a9a;border-bottom:1px solid #9a9a9a;background:#f0f0ec;"></div>
<div class="t b" style="left:315.8px;top:427.3px;font-size:8.7px;">Operation :  No operation</div>
<div class="t b" style="left:470.8px;top:427.3px;font-size:8.9px;">Number of Objects in Preset :  0</div>
<div class="btn" style="left:573px;top:450.8px;width:66.2px;height:20.2px;line-height:17px;">Apply</div>
<div class="btn" style="left:642.4px;top:450.8px;width:67.6px;height:20.2px;line-height:17px;">Cancel</div>
</div>
</body>
</html>
